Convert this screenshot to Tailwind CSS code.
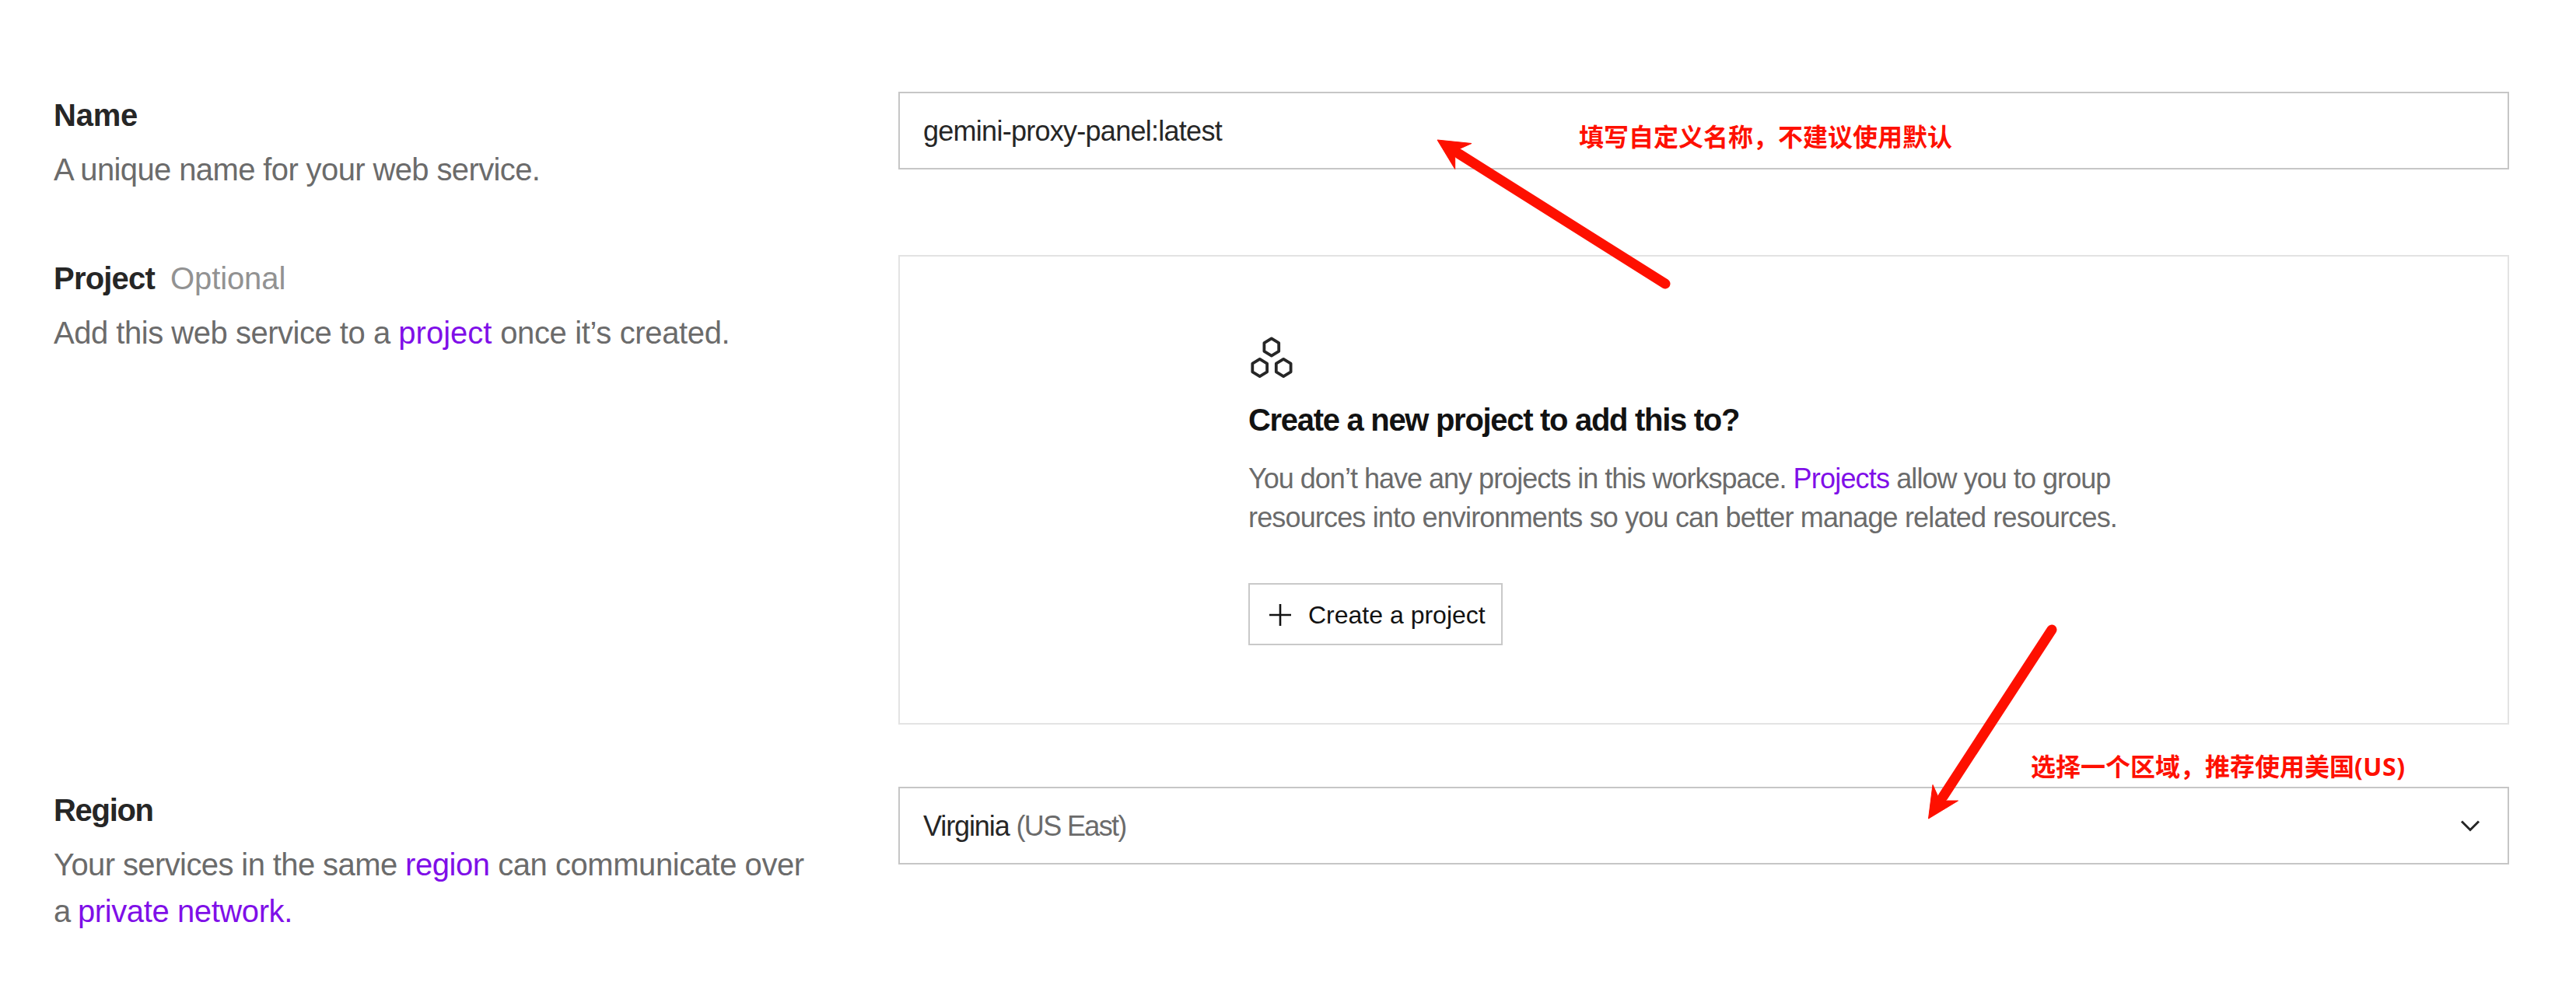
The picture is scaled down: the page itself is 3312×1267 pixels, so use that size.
<!DOCTYPE html>
<html lang="en">
<head>
<meta charset="utf-8">
<title>New web service</title>
<script src="https://cdn.jsdelivr.net/npm/@tailwindcss/browser@4"></script>
</head>
<body class="relative h-[1267px] w-[3312px] overflow-hidden bg-white pt-[118px] pl-[69px] font-['Liberation_Sans',Arial,sans-serif] text-[40px] leading-[60px] text-[#6b6b6b]">
<main class="flex w-[3157px] flex-col whitespace-nowrap">

  <section class="flex h-[210px] items-start">
    <div class="flex w-[1086px] flex-col gap-[10px]">
      <h2 class="font-bold tracking-[-0.2px] text-[#262626]">Name</h2>
      <p class="tracking-[-0.62px]">A unique name for your web service.</p>
    </div>
    <div class="flex h-[100px] w-[2071px] items-center border-2 border-[#c6c6c6] pt-px pl-[30px] text-[36px] tracking-[-0.73px] text-[#262626]">gemini-proxy-panel:latest</div>
  </section>

  <section class="flex h-[684px] items-start">
    <div class="flex w-[1086px] flex-col gap-[10px]">
      <div class="flex gap-[20px]">
        <h2 class="font-bold tracking-[-0.8px] text-[#262626]">Project</h2>
        <span class="tracking-[-0.1px] text-[#929292]">Optional</span>
      </div>
      <p class="tracking-[-0.36px]"><span class="tracking-[-0.48px]">Add this web service to a </span><a class="tracking-[0px] text-[#7f0fe8]">project</a> once it’s created.</p>
    </div>
    <div class="flex h-[604px] w-[2071px] flex-col items-start border-2 border-[#e3e3e3] pt-[100px] pl-[448px]">
      <svg class="h-[60px] w-[60px]" viewBox="0 0 60 60" fill="none" stroke="#262626" stroke-width="3.8" stroke-linejoin="round">
        <path d="M29.8 5.4l9.4 5.8v10.6l-9.4 5.8l-9.4-5.8v-10.6z"/>
        <path d="M14.7 31.9l9.4 5.8v10.6l-9.4 5.8l-9.4-5.8v-10.6z"/>
        <path d="M45.2 31.9l9.4 5.8v10.6l-9.4 5.8l-9.4-5.8v-10.6z"/>
      </svg>
      <h3 class="mt-5 font-bold tracking-[-1.3px] text-[#121212]">Create a new project to add this to?</h3>
      <p class="mt-[21px] text-[36px] leading-[50px]"><span class="tracking-[-0.95px]"><span class="tracking-[-0.99px]">You don’t have any projects in this workspace. </span><a class="tracking-[-0.8px] text-[#7f0fe8]">Projects</a> allow you to group</span><br><span class="tracking-[-0.84px]">resources into environments so you can better manage related resources.</span></p>
      <button class="mt-[59px] flex h-[80px] w-[327px] items-center border-2 border-[#c9c9c9] pt-px pl-[24px] text-[32px] text-[#121212]">
        <svg class="mr-[21px] h-[30px] w-[30px]" viewBox="0 0 30 30" fill="none" stroke="#121212" stroke-width="2.6"><path d="M1 15h28M15 1v28"/></svg>
        Create a project
      </button>
    </div>
  </section>

  <section class="flex items-start">
    <div class="flex w-[1086px] flex-col gap-[10px]">
      <h2 class="font-bold tracking-[-1.3px] text-[#262626]">Region</h2>
      <p class="tracking-[-0.45px]"><span class="tracking-[-0.6px]">Your services in the same </span><a class="text-[#7f0fe8]">region</a> can communicate over<br><span class="tracking-[-1.2px]">a </span><a class="tracking-[-0.4px] text-[#7f0fe8]">private network.</a></p>
    </div>
    <div class="flex h-[100px] w-[2071px] items-center justify-between border-2 border-[#c6c6c6] pr-8 pl-[30px] text-[36px] tracking-[-1.1px] text-[#262626]">
      <span class="pt-px">Virginia <span class="tracking-[-1.65px] text-[#6b6b6b]">(US East)</span></span>
      <svg class="h-8 w-8" viewBox="0 0 32 32" fill="none" stroke="#262626" stroke-width="3"><path d="M5 10.5l11 11l11-11"/></svg>
    </div>
  </section>
</main>

<!-- Annotations over the form -->
<svg class="absolute top-0 left-0 h-[1267px] w-[3312px]" viewBox="0 0 3312 1267" fill="#fe1000" stroke="#fe1000">
  <path d="M1876 198L2141 365" stroke-width="13" stroke-linecap="round"/>
  <path d="M1848 180L1892 184.500L1877.500 191L1870.700 202V217.500z" stroke-width="1"/>
  <path d="M2498 1025L2638 810" stroke-width="13" stroke-linecap="round"/>
  <path d="M2479.500 1053L2485 1009.500L2491.500 1024L2502 1030H2517.500z" stroke-width="1"/>
</svg>
<p class="absolute top-[144px] left-[2030px] font-['Noto_Sans_CJK_SC',sans-serif] text-[32px] font-bold whitespace-nowrap text-[#fe1000]">填写自定义名称，不建议使用默认</p>
<p class="absolute top-[954px] left-[2611px] font-['Noto_Sans_CJK_SC',sans-serif] text-[32px] font-bold whitespace-nowrap text-[#fe1000]">选择一个区域，推荐使用美国<span class="font-['Open_Sans',sans-serif] tracking-[0.5px]">(US)</span></p>
</body>
</html>
